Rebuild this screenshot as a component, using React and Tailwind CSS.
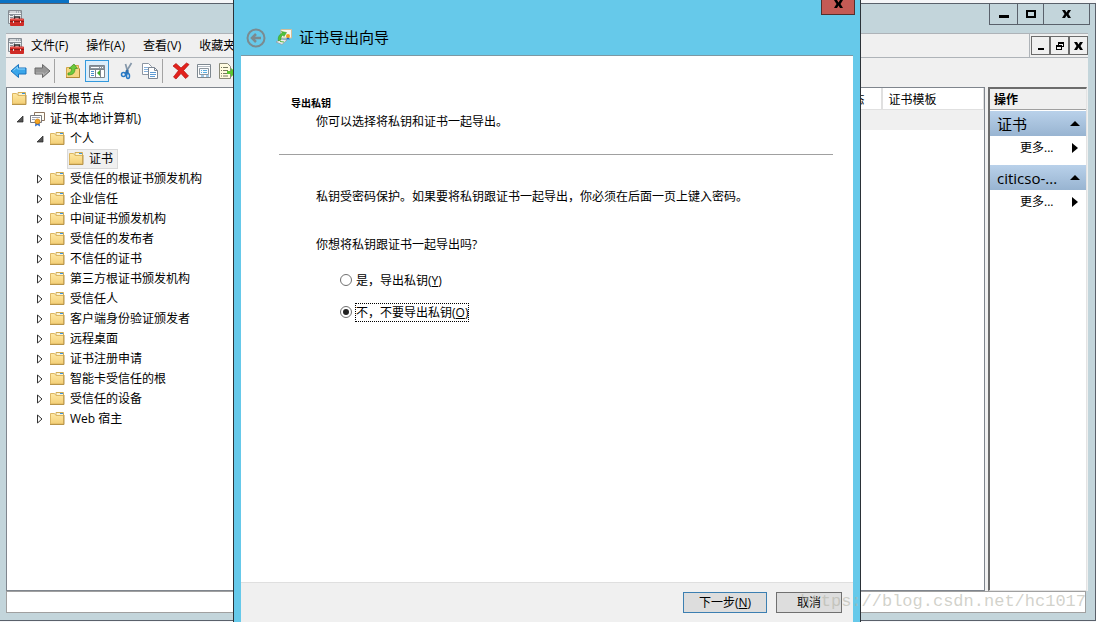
import React, { useState } from 'react';

const treeItems = [
  { label: '控制台根节点', level: 0, icon: 'folder' },
  { label: '证书(本地计算机)', level: 1, icon: 'cert', state: 'open' },
  { label: '个人', level: 2, icon: 'folder', state: 'open' },
  { label: '证书', level: 3, icon: 'folder', selected: true },
  { label: '受信任的根证书颁发机构', level: 2, icon: 'folder', state: 'closed' },
  { label: '企业信任', level: 2, icon: 'folder', state: 'closed' },
  { label: '中间证书颁发机构', level: 2, icon: 'folder', state: 'closed' },
  { label: '受信任的发布者', level: 2, icon: 'folder', state: 'closed' },
  { label: '不信任的证书', level: 2, icon: 'folder', state: 'closed' },
  { label: '第三方根证书颁发机构', level: 2, icon: 'folder', state: 'closed' },
  { label: '受信任人', level: 2, icon: 'folder', state: 'closed' },
  { label: '客户端身份验证颁发者', level: 2, icon: 'folder', state: 'closed' },
  { label: '远程桌面', level: 2, icon: 'folder', state: 'closed' },
  { label: '证书注册申请', level: 2, icon: 'folder', state: 'closed' },
  { label: '智能卡受信任的根', level: 2, icon: 'folder', state: 'closed' },
  { label: '受信任的设备', level: 2, icon: 'folder', state: 'closed' },
  { label: 'Web 宿主', level: 2, icon: 'folder', state: 'closed' },
];

const levelPadding = ['pl-1', 'pl-2', 'pl-7', 'pl-15'];

const FolderIcon = () => (
  <svg width="16" height="16" viewBox="1 1 16 16" className="shrink-0">
    <defs>
      <linearGradient id="folder" x1="0" y1="0" x2="0" y2="1">
        <stop offset="0" stopColor="#ffe9a3" />
        <stop offset="1" stopColor="#f3cf76" />
      </linearGradient>
    </defs>
    <path d="M7 2.500h7.500V6H7z" fill="#fbf3d0" stroke="#d2ad55" />
    <path d="M11 3h3v1h-3z" fill="#3f93d8" />
    <path d="M1.500 3.500h4l1.500 2h7.500v8.500h-13z" fill="url(#folder)" stroke="#dcb662" />
    <path d="M1 14.500h14V5" fill="none" stroke="#b8954a" />
  </svg>
);

const CertIcon = () => (
  <svg width="16" height="16" viewBox="0 0 16 16" className="shrink-0">
    <path d="M4.500 1.500h10v8h-10z" fill="#fffdf3" stroke="#8c7460" />
    <path d="M.5 4.500h11v7H.5z" fill="#fff" stroke="#77797f" />
    <path d="M2 6.500h8M2 8.500h3" stroke="#a0a4b0" />
    <path d="M5.500 11L5 15.500l2.500-1.500 2.500 1.500-.5-4.500z" fill="#2f6fd0" />
    <circle cx="7.500" cy="10.500" r="2.500" fill="#f5a623" stroke="#c67a14" strokeWidth=".7" />
  </svg>
);

const ConsoleIcon = () => (
  <svg width="18" height="18" viewBox="0 0 18 18" className="shrink-0">
    <path d="M1.500 1.500h13v13h-13z" fill="#eef1f2" stroke="#858c93" />
    <path d="M2 2h12v2H2z" fill="#a6adb3" />
    <path d="M3 3h6M10 3h1M12 3h1" stroke="#fff" />
    <path d="M2 5.500h12M3 8.500h3M3 6.500h3M7.500 6v5" stroke="#8b9198" />
    <path d="M7.500 10V8h5v2" fill="none" stroke="#2c2c2c" strokeWidth="1.500" />
    <rect x="3" y="9.500" width="14" height="7.500" rx="1" fill="#cf2b26" />
    <path d="M3 12.500h14" stroke="#8f1a17" />
    <path d="M4 10.500h12" stroke="#e5564d" />
    <path d="M6 12h1v2H6zM13 12h1v2h-1z" fill="#ddd" />
  </svg>
);

const ArrowIcon = ({ right }) => (
  <svg width="18" height="16" viewBox="0 0 18 16" className={right ? 'rotate-180' : ''}>
    <path
      d="M1 8l7.500-6.500V5H16v6H8.500v3.500z"
      fill={right ? '#969696' : '#3aa6ea'}
      stroke={right ? '#6b6b6b' : '#1b73bd'}
    />
    <path d="M3.500 7.500l4-3.500v2H15" fill="none" stroke={right ? '#b5b5b5' : '#8fd5fb'} />
  </svg>
);

const UpFolderIcon = () => (
  <svg width="16" height="16" viewBox="0 0 16 16">
    <path d="M1.500 4.500h5l1-2h6v3h1v9h-13z" fill="#f7d681" stroke="#d1a548" />
    <path d="M1 14.500h13.500V6" fill="none" stroke="#b08a35" />
    <path d="M3 10c3 0 3.500-2 3.500-4.500H4L9 1l3.500 4.500H10c0 4.500-2 6.500-7 6.500z" fill="#6cc93c" stroke="#3f9420" strokeWidth=".7" />
  </svg>
);

const TreeViewIcon = () => (
  <svg width="18" height="16" viewBox="0 0 18 16">
    <path d="M1.500 2.500h15v12h-15z" fill="#fff" stroke="#7d858d" />
    <path d="M2 3h14v3H2z" fill="#8a949c" />
    <path d="M3 4.500h8M12 4.500h1M14 4.500h1" stroke="#fff" />
    <path d="M7.500 6v8M12.500 6v8M2 6.500h14" stroke="#7d858d" />
    <path d="M3 8.500h3M3 10.500h3M3 12.500h3" stroke="#4a91ce" />
    <path d="M12 7v6l-3-3z" fill="#3fae29" />
  </svg>
);

const CutIcon = () => (
  <svg width="16" height="18" viewBox="0 0 16 18">
    <path d="M12.500 1L6.500 11M6.500 2L9 11" fill="none" stroke="#8698aa" strokeWidth="1.700" />
    <path d="M9 8l-2.500 4M7.500 8L9 11" stroke="#2e6fae" strokeWidth="2" />
    <ellipse cx="4.500" cy="12.500" rx="2" ry="2" fill="none" stroke="#277ac7" strokeWidth="1.500" />
    <ellipse cx="9" cy="14" rx="1.500" ry="2.500" fill="none" stroke="#277ac7" strokeWidth="1.500" />
  </svg>
);

const CopyIcon = () => (
  <svg width="18" height="18" viewBox="0 0 18 18">
    <path d="M1.500 1.500h6l3 3v8h-9z" fill="#fff" stroke="#8c96a3" />
    <path d="M3 5.500h5M3 7.500h5M3 9.500h4" stroke="#86b1dc" />
    <path d="M7.500 5.500h6l3 3v8h-9z" fill="#fff" stroke="#7d8794" />
    <path d="M13.500 5.500v3h3" fill="none" stroke="#7d8794" />
    <path d="M9 10.500h6M9 12.500h6M9 14.500h5" stroke="#5d9bd5" />
  </svg>
);

const DeleteIcon = () => (
  <svg width="18" height="18" viewBox="0 0 18 18">
    <path
      d="M1 4l3-2.500 5 4.500 5.500-5 2.500 1.500-5.500 6 5 5.500-3 2.500L9 11.500 4 17l-2.500-2 5-6.500z"
      fill="#e3211c"
      stroke="#b5100d"
      strokeWidth=".7"
    />
  </svg>
);

const PropertiesIcon = () => (
  <svg width="16" height="16" viewBox="0 0 16 16">
    <path d="M1.500 1.500h13v13h-13z" fill="#fff" stroke="#7e8890" />
    <path d="M2 3.500h12" stroke="#b4bcc4" />
    <path d="M3.500 5.500h9v6h-9z" fill="#f7fbff" stroke="#8d979f" />
    <path d="M5 7.500h1M7 7.500h4M5 9.500h1M7 9.500h4" stroke="#58aee0" />
    <path d="M5 13h3M10 13h3" stroke="#4593ce" />
  </svg>
);

const ExportListIcon = () => (
  <svg width="18" height="16" viewBox="0 0 18 16" className="shrink-0">
    <path d="M1.500.5h8l3 3v12h-11z" fill="#fffbe0" stroke="#8b8a78" />
    <path d="M3 4.500h1M5 4.500h5M3 7.500h1M5 7.500h5M3 10.500h1M5 10.500h5M3 13h1M5 13h5" stroke="#77795e" />
    <path d="M9 8h4V5l5 4.500-5 4.500v-3H9z" fill="#5cc62f" />
  </svg>
);

const WizardIcon = () => (
  <svg width="16" height="16" viewBox="0 0 16 16">
    <path d="M5 .500h10.500v8.500H5z" fill="#f8f6ef" stroke="#d3bd98" />
    <path d="M11 8l-.5 3 1.500-1 1.500 1L13 8z" fill="#2b62c0" />
    <circle cx="12" cy="7" r="2" fill="#f0a020" />
    <path d="M0 13l5-3 6 1-5 4.500z" fill="#eceeef" stroke="#8e979c" strokeWidth=".7" />
    <path d="M2.500 12c-1-4 1-7 4-8L5.500 2.500l5 1L8 7.500 7 6C5 7 4.500 9 5 11z" fill="#4fc23b" stroke="#319321" strokeWidth=".5" />
    <path d="M4 12.500l4 .500" stroke="#57b944" />
  </svg>
);

const MinimizeIcon = () => (
  <svg width="10" height="10" viewBox="0 0 10 10"><path d="M0 6h10v3H0z" /></svg>
);

const MaximizeIcon = () => (
  <svg width="10" height="8" viewBox="0 0 10 8"><path d="M1 1h8v6H1z" fill="none" stroke="#000" strokeWidth="2" /></svg>
);

const CloseIcon = () => (
  <svg width="9" height="8" viewBox="0 0 9 8"><path d="M0 0h3l1.500 2.500L6 0h3L6.500 4 9 8H6L4.500 5.500 3 8H0l2.500-4z" /></svg>
);

const RestoreIcon = () => (
  <svg width="8" height="8" viewBox="0 0 8 8">
    <path d="M2 0h6v5H6V4h1V2H3v1H2zM0 3h6v5H0zm1 2v2h4V5z" fillRule="evenodd" />
  </svg>
);

const Expander = ({ state }) => (
  <svg width="8" height="10" viewBox="0 0 8 10" className="shrink-0">
    {state === 'open' && <path d="M7 2v6H1z" fill="#555" stroke="#222" strokeWidth=".7" />}
    {state === 'closed' && <path d="M1.500 1v8l4.500-4z" fill="#fff" stroke="#333" />}
  </svg>
);

const TreeRow = ({ item }) => (
  <li className={`flex h-5 items-center ${levelPadding[item.level]}`}>
    {item.state && (
      <button aria-label={item.label} className="mr-1 flex w-2.5 justify-center">
        <Expander state={item.state} />
      </button>
    )}
    <span
      className={`flex h-5 items-center gap-1 whitespace-nowrap border pr-1 ${
        item.selected ? 'border-[#d9d9d9] bg-[#f0f0f0] pl-px' : 'border-transparent'
      }`}
    >
      {item.icon === 'cert' ? <CertIcon /> : <FolderIcon />}
      <span>{item.label}</span>
    </span>
  </li>
);

const ToolSeparator = () => <span className="h-6 w-px bg-[#a3a3a3]" />;

const ActionGroup = ({ title }) => (
  <section className="mb-1">
    <h3 className="flex h-[25px] items-center justify-between bg-linear-to-b from-[#b9d1ea] to-[#98b4d1] pr-1.5 pl-[7px] text-[15px]">
      {title}
      <svg width="10" height="6" viewBox="0 0 10 6"><path d="M5 0l5 5H0z" /></svg>
    </h3>
    <button className="flex h-[25px] w-full items-center justify-between pr-2 pb-0.5 pl-[30px]">
      更多...
      <svg width="6" height="10" viewBox="0 0 6 10"><path d="M0 0l6 5-6 5z" /></svg>
    </button>
  </section>
);

const ConsoleWindow = () => (
  <div className="flex min-h-0 flex-1 flex-col border-t border-r border-b border-[#5a616b] bg-[#c3d5db] pr-[7px] pb-[7px] pl-1.5">
    <header className="flex h-[29px] shrink-0 items-start justify-between">
      <div className="pt-[5px] pl-px">
        <ConsoleIcon />
      </div>
      <div className="-mr-0.5 flex h-[21px] divide-x divide-[#5a616b] border border-t-0 border-[#5a616b]">
        <button aria-label="最小化" className="flex w-7 items-center justify-center"><MinimizeIcon /></button>
        <button aria-label="最大化" className="flex w-[26px] items-center justify-center"><MaximizeIcon /></button>
        <button aria-label="关闭" className="flex w-[45px] items-center justify-center"><CloseIcon /></button>
      </div>
    </header>

    <nav className="flex h-[25px] shrink-0 items-center border-y border-[#aeb3b8] bg-[#f0f0f0]">
      <div className="flex flex-1 items-center pl-px whitespace-nowrap">
        <ConsoleIcon />
        <div className="ml-1.5 flex gap-[18px]">
          <button>文件(F)</button>
          <button>操作(A)</button>
          <button>查看(V)</button>
          <button>收藏夹(O)</button>
        </div>
      </div>
      <div className="flex h-full items-center border-l border-[#aeb3b8] pl-px">
        <button aria-label="最小化" className="flex h-[19px] w-[19px] items-center justify-center border border-[#6b6b6b] pt-1.5"><svg width="6" height="2"><path d="M0 0h6v2H0z" /></svg></button>
        <button aria-label="还原" className="flex h-[19px] w-[19px] items-center justify-center border border-[#6b6b6b]"><RestoreIcon /></button>
        <button aria-label="关闭" className="flex h-[19px] w-[19px] items-center justify-center border border-[#6b6b6b]"><CloseIcon /></button>
      </div>
    </nav>

    <div className="flex h-[29px] shrink-0 items-center bg-[#f0f0f0] pb-1 pl-1">
      <div className="flex gap-[5px] pr-[3px]">
        <button aria-label="后退"><ArrowIcon /></button>
        <button aria-label="前进"><ArrowIcon right /></button>
      </div>
      <ToolSeparator />
      <div className="flex items-center gap-1 pl-2.5">
        <button aria-label="上移"><UpFolderIcon /></button>
        <button aria-label="显示控制台树" className="flex h-[22px] w-6 items-center justify-center border border-[#3399dd] bg-[#dceefb]"><TreeViewIcon /></button>
      </div>
      <div className="flex items-center gap-1.5 pr-[3px] pl-2.5">
        <button aria-label="剪切"><CutIcon /></button>
        <button aria-label="复制"><CopyIcon /></button>
      </div>
      <ToolSeparator />
      <div className="flex items-center gap-1.5 pl-[9px]">
        <button aria-label="删除"><DeleteIcon /></button>
        <button aria-label="属性"><PropertiesIcon /></button>
        <button aria-label="导出列表"><ExportListIcon /></button>
      </div>
    </div>

    <main className="flex min-h-0 flex-1 gap-[3px] bg-[#f0f0f0] pr-px">
      <ul className="w-60 shrink-0 border border-[#7f858d] bg-white pt-px">
        {treeItems.map((item) => (
          <TreeRow key={item.label + item.level} item={item} />
        ))}
      </ul>
      <div className="flex-1 border border-[#7f858d] bg-white">
        <table className="w-full table-fixed">
          <thead>
            <tr className="h-[21px] text-left">
              <th className="border-r-2 border-b border-[#e0e0e0] pt-1 pr-4 text-right font-normal">状态</th>
              <th className="w-[102px] border-r border-b border-[#e0e0e0] pt-1 pl-1.5 font-normal">证书模板</th>
            </tr>
          </thead>
          <tbody>
            <tr className="h-[21px] bg-[#f0f0f0]">
              <td />
              <td />
            </tr>
          </tbody>
        </table>
      </div>
      <aside className="w-[99px] shrink-0 border border-t-2 border-r-[#e3e3e3] border-b-[#e3e3e3] border-l-2 border-t-[#6c6c6c] border-l-[#6c6c6c] bg-white">
        <h2 className="mb-px flex h-[21px] items-center border-b border-[#a0a0a0] bg-[#f0f0f0] pt-0.5 pl-1 font-bold">操作</h2>
        <ActionGroup title="证书" />
        <ActionGroup title="citicso-..." />
      </aside>
    </main>

    <footer className="mr-0.5 h-[22px] shrink-0 border border-[#a0a0a0] bg-white" />
  </div>
);

const ExportWizard = () => {
  const [exportKey, setExportKey] = useState('no');

  return (
    <div
      role="dialog"
      aria-label="证书导出向导"
      className="absolute inset-y-0 left-[233px] flex w-[628px] flex-col border-x border-[#2b3238] bg-[#66c9ea] px-[7px]"
    >
      <header className="relative flex h-[55px] shrink-0 items-end pb-[7px] pl-[5px]">
        <button aria-label="后退" className="mr-[10px]">
          <svg width="20" height="20" viewBox="0 0 20 20" fill="none" stroke="#7b8b90" strokeWidth="2">
            <circle cx="10" cy="10" r="8.500" />
            <path d="M15 10H6M10 6l-4 4 4 4" strokeWidth="2.500" />
          </svg>
        </button>
        <div className="flex h-[22px] items-center gap-[7px]">
          <WizardIcon />
          <h1 className="text-[15px]">证书导出向导</h1>
        </div>
        <button
          aria-label="关闭"
          className="absolute top-0 -right-0.5 flex h-[15px] w-[34px] items-start justify-center border border-t-0 border-[#52302f] bg-[#c45a55]"
        >
          <CloseIcon />
        </button>
      </header>

      <main className="flex-1 border-t border-[#7d98a3] bg-white pt-[37px] pr-5 pl-[38px]">
        <div className="border-b border-[#a0a0a0] pb-[23px] pl-3">
          <h2 className="text-[10px] leading-5 font-bold">导出私钥</h2>
          <p className="pl-[25px] leading-[18px]">你可以选择将私钥和证书一起导出。</p>
        </div>
        <div className="pt-8 pl-[37px]">
          <p className="leading-5">私钥受密码保护。如果要将私钥跟证书一起导出，你必须在后面一页上键入密码。</p>
          <p className="mt-7 leading-5">你想将私钥跟证书一起导出吗?</p>
          <div className="mt-[15px] flex flex-col items-start gap-3 pl-6">
            {[
              { value: 'yes', text: '是，导出私钥(', hotkey: 'Y' },
              { value: 'no', text: '不，不要导出私钥(', hotkey: 'O' },
            ].map(({ value, text, hotkey }) => (
              <label key={value} className="flex h-5 items-center gap-[3px]">
                <input
                  type="radio"
                  name="export-key"
                  checked={exportKey === value}
                  onChange={() => setExportKey(value)}
                  className="size-3 appearance-none rounded-full border border-[#707070] bg-white checked:bg-[#222] checked:bg-clip-content checked:p-0.5"
                />
                <span
                  className={`border border-dotted leading-[17px] ${
                    exportKey === value ? 'border-black' : 'border-transparent'
                  }`}
                >
                  {text}<u>{hotkey}</u>)
                </span>
              </label>
            ))}
          </div>
        </div>
      </main>

      <footer className="flex h-10 shrink-0 justify-end gap-[9px] border-t border-[#dfdfdf] bg-[#f0f0f0] pt-[9px] pr-[11px]">
        <button className="h-[21px] w-[84px] border border-[#3c7fb1] bg-[#dddddd]">下一步(<u>N</u>)</button>
        <button className="h-[21px] w-[66px] border border-[#707070] bg-[#dddddd]">取消</button>
      </footer>
    </div>
  );
};

export default function App() {
  return (
    <div className="relative flex h-screen flex-col overflow-hidden bg-[#f5f6f8] pb-px font-['Open_Sans','Noto_Sans_CJK_SC',sans-serif] text-[12px] leading-4 text-black">
      <div className="h-[3px] w-[69px] shrink-0 bg-[#0a72c4]" />
      <ConsoleWindow />
      <ExportWizard />
      <span className="pointer-events-none absolute right-2.5 bottom-2 font-['Liberation_Mono',monospace] text-[17px] leading-6 text-[#b4b4a8]/60">
        https://blog.csdn.net/hc1017
      </span>
    </div>
  );
}
